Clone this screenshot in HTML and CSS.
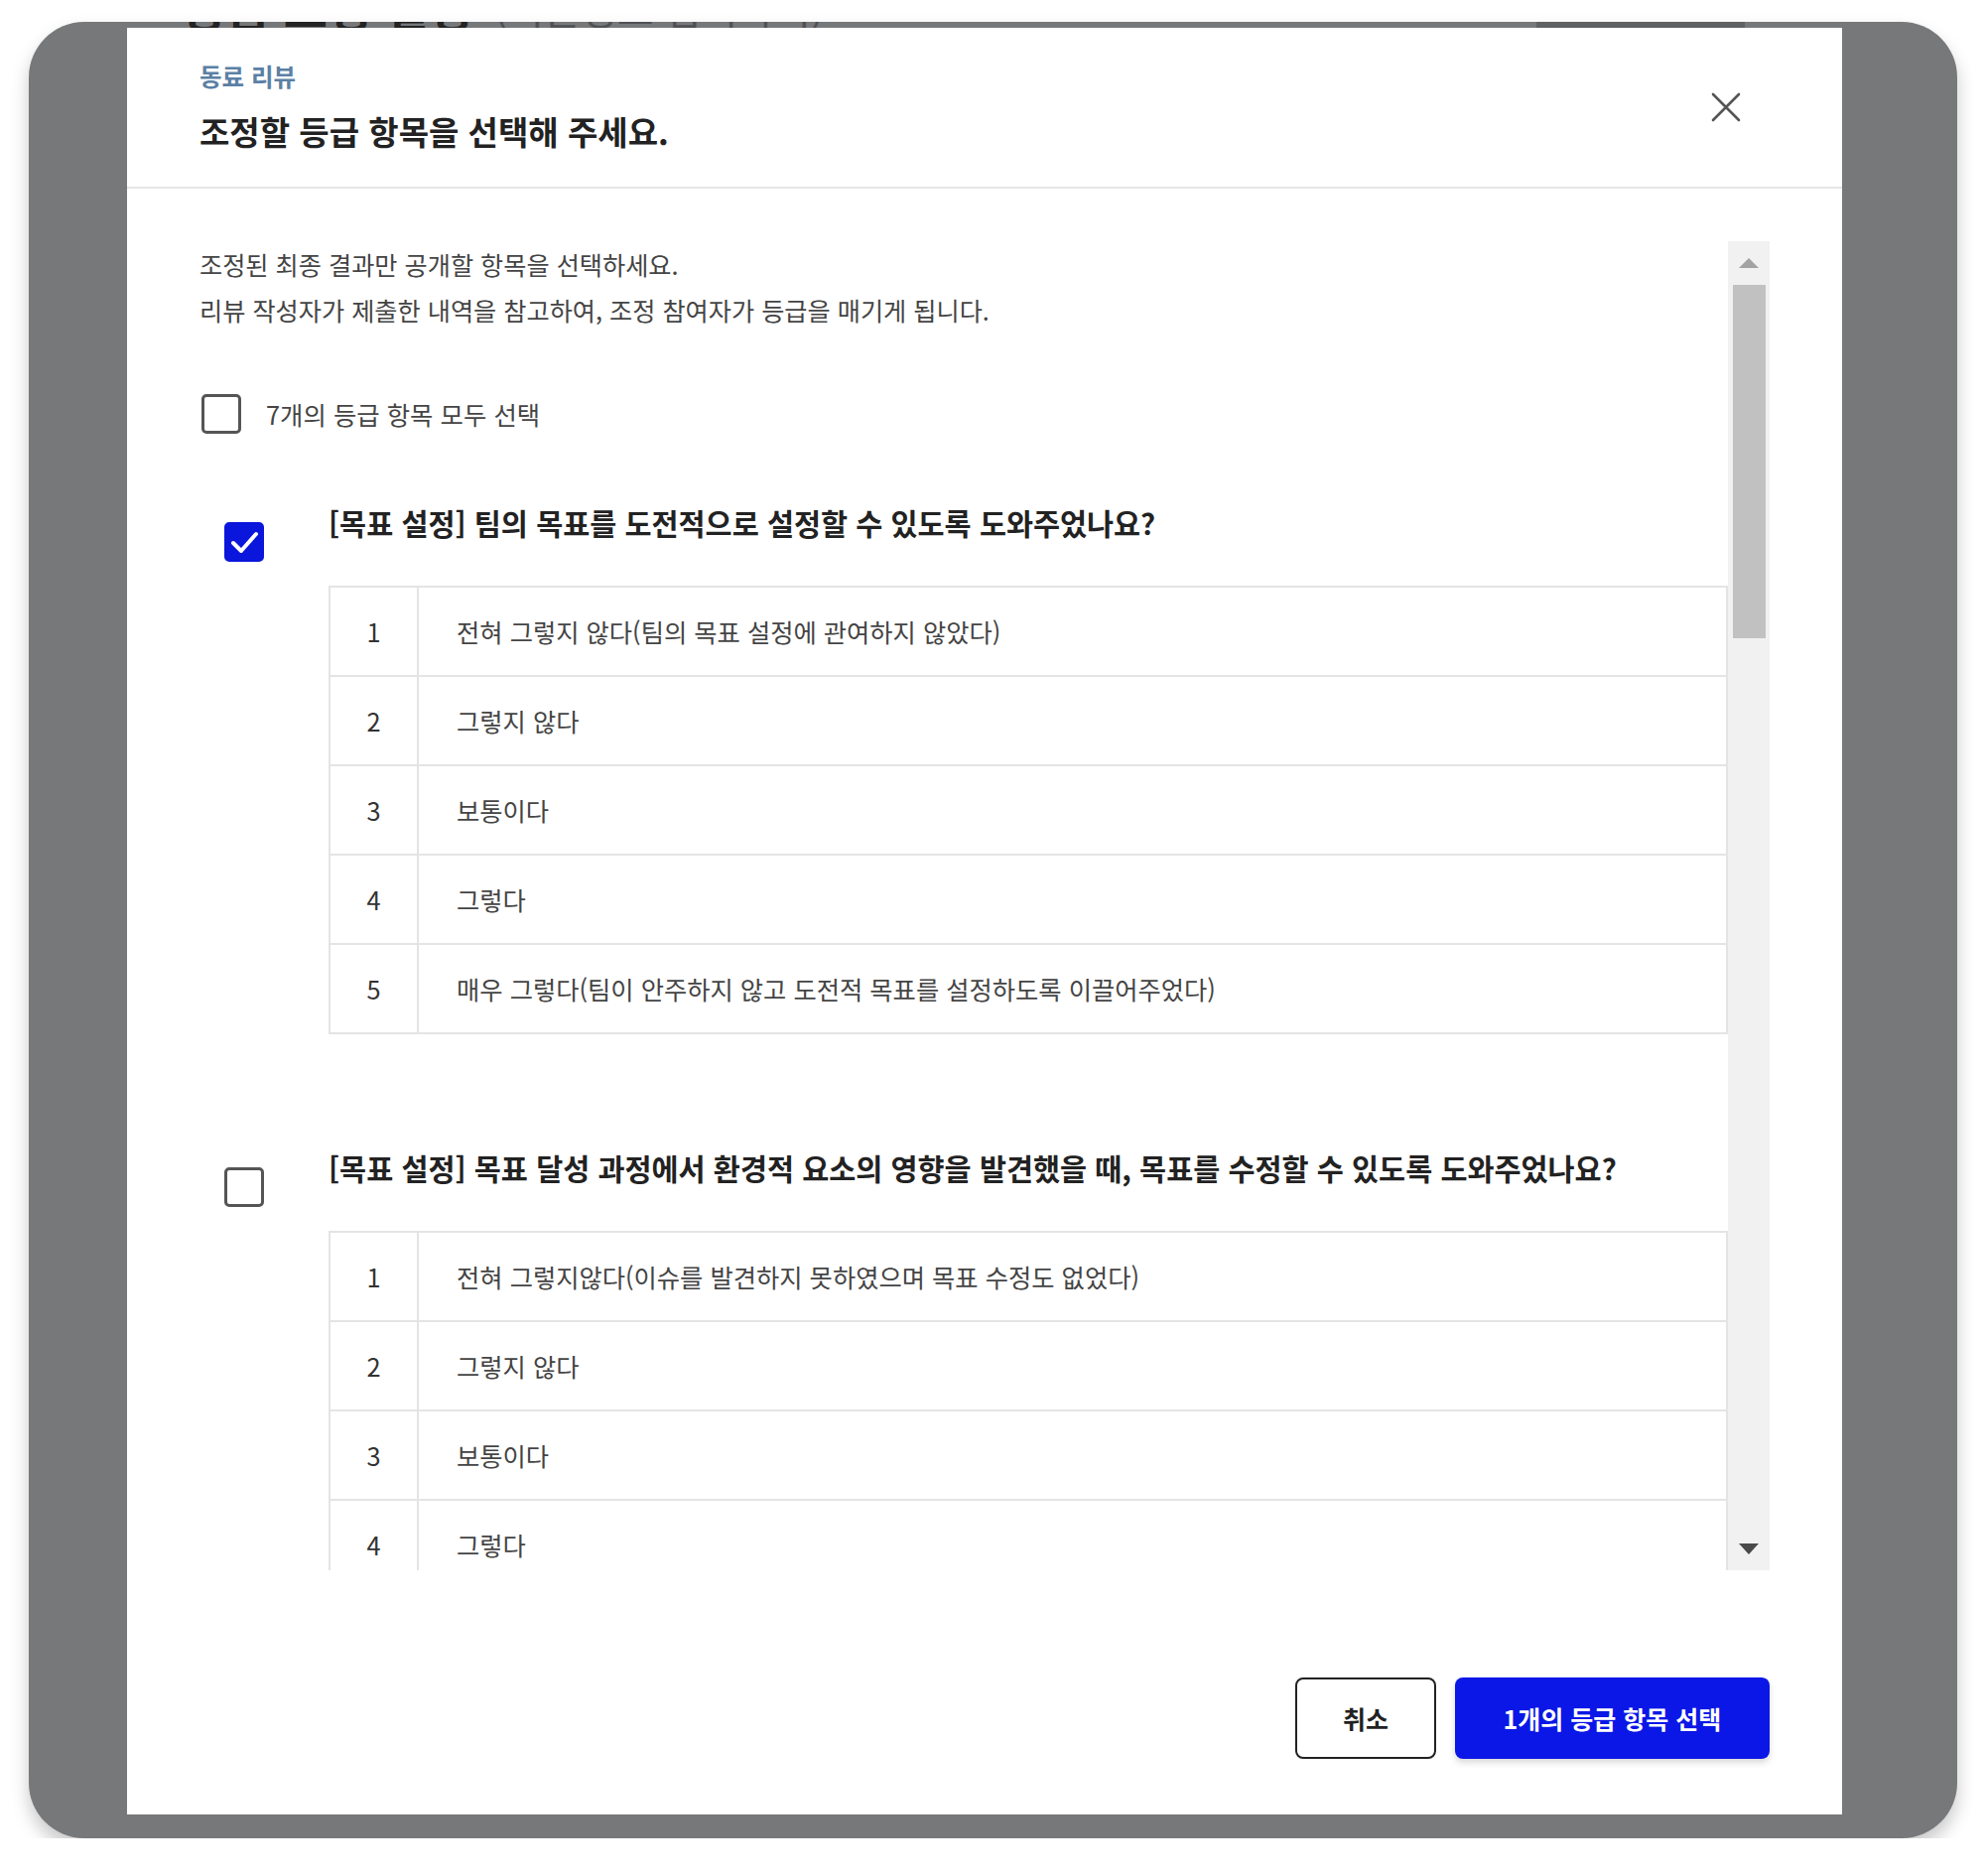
FILE: index.html
```html
<!DOCTYPE html>
<html lang="ko">

<head>
    <meta charset="UTF-8">
    <meta name="viewport" content="width=device-width, initial-scale=1.0">
    <title>동료 리뷰 - 조정할 등급 항목 선택</title>
    <link rel="stylesheet" href="styles.css">
</head>

<body>
    <div class="frame">
        <div class="peek">
            <span class="peek-title">등급 조정 설정</span>
            <span class="peek-sub">(기본정보 입력하기)</span>
            <span class="peek-btn"></span>
        </div>

        <div class="modal">
            <div class="modal-header">
                <div>
                    <p class="eyebrow">동료 리뷰</p>
                    <h1 class="title">조정할 등급 항목을 선택해 주세요.</h1>
                </div>
                <button type="button" class="close" aria-label="닫기">
                    <svg width="30" height="30" viewBox="0 0 30 30">
                        <path d="M2 2 L28 28 M28 2 L2 28" stroke="#555" stroke-width="2.6" stroke-linecap="round" fill="none"/>
                    </svg>
                </button>
            </div>

            <div class="modal-body">
                <div class="content">
                    <p class="desc">조정된 최종 결과만 공개할 항목을 선택하세요.<br>리뷰 작성자가 제출한 내역을 참고하여, 조정 참여자가 등급을 매기게 됩니다.</p>

                    <label class="select-all">
                        <span class="box"></span>
                        7개의 등급 항목 모두 선택
                    </label>

                    <div class="question">
                        <span class="box checked">
                            <svg width="40" height="40" viewBox="0 0 40 40">
                                <path d="M9 21 L17 29 L32 12" stroke="#fff" stroke-width="4" stroke-linecap="round" stroke-linejoin="round" fill="none"/>
                            </svg>
                        </span>
                        <div>
                            <h2 class="q-title">[목표 설정] 팀의 목표를 도전적으로 설정할 수 있도록 도와주었나요?</h2>
                            <table class="scale">
                                <tr><td class="num">1</td><td>전혀 그렇지 않다(팀의 목표 설정에 관여하지 않았다)</td></tr>
                                <tr><td class="num">2</td><td>그렇지 않다</td></tr>
                                <tr><td class="num">3</td><td>보통이다</td></tr>
                                <tr><td class="num">4</td><td>그렇다</td></tr>
                                <tr><td class="num">5</td><td>매우 그렇다(팀이 안주하지 않고 도전적 목표를 설정하도록 이끌어주었다)</td></tr>
                            </table>
                        </div>
                    </div>

                    <div class="question">
                        <span class="box"></span>
                        <div>
                            <h2 class="q-title">[목표 설정] 목표 달성 과정에서 환경적 요소의 영향을 발견했을 때, 목표를 수정할 수 있도록 도와주었나요?</h2>
                            <table class="scale">
                                <tr><td class="num">1</td><td>전혀 그렇지않다(이슈를 발견하지 못하였으며 목표 수정도 없었다)</td></tr>
                                <tr><td class="num">2</td><td>그렇지 않다</td></tr>
                                <tr><td class="num">3</td><td>보통이다</td></tr>
                                <tr><td class="num">4</td><td>그렇다</td></tr>
                                <tr><td class="num">5</td><td>매우 그렇다</td></tr>
                            </table>
                        </div>
                    </div>
                </div>

                <div class="scrollbar">
                    <div class="sb-btn">
                        <svg width="20" height="10" viewBox="0 0 20 10"><polygon points="10,0 20,10 0,10" fill="#a3a3a3"/></svg>
                    </div>
                    <div class="sb-thumb"></div>
                    <div class="sb-track"></div>
                    <div class="sb-btn">
                        <svg width="20" height="11" viewBox="0 0 20 11"><polygon points="0,0 20,0 10,11" fill="#4a4a4a"/></svg>
                    </div>
                </div>
            </div>

            <div class="modal-footer">
                <button type="button" class="btn btn-cancel">취소</button>
                <button type="button" class="btn btn-primary">1개의 등급 항목 선택</button>
            </div>
        </div>
    </div>
</body>

</html>
```

FILE: styles.css
```css
body {
    margin: 0;
    padding: 22px 0 0 29px;
    background-color: #fff;
    font-family: "Noto Sans CJK KR", "Noto Sans", sans-serif;
    color: #333;
}

.frame {
    box-sizing: border-box;
    width: 1943px;
    height: 1830px;
    padding: 0 116px 0 99px;
    background-color: #77787a;
    border-radius: 56px;
    box-shadow: 0 10px 18px rgba(0, 0, 0, 0.22);
    overflow: hidden;
    display: flex;
    flex-direction: column;
}

/* the page underneath, only its bottom edge shows */
.peek {
    height: 6px;
    padding-left: 56px;
    display: flex;
    align-items: flex-end;
    gap: 22px;
    overflow: hidden;
}

.peek-title {
    font-size: 48px;
    line-height: 44px;
    font-weight: 700;
    color: #232324;
    white-space: nowrap;
}

.peek-sub {
    font-size: 40px;
    line-height: 40px;
    color: #505155;
    white-space: nowrap;
}

.peek-btn {
    margin-left: auto;
    margin-right: 98px;
    width: 210px;
    height: 40px;
    background-color: #606163;
}

.modal {
    width: 1728px;
    height: 1800px;
    background-color: #fff;
    display: flex;
    flex-direction: column;
}

.modal-header {
    box-sizing: border-box;
    height: 162px;
    padding: 34px 73px 34px;
    border-bottom: 2px solid #e6e6e6;
    display: flex;
    justify-content: space-between;
    align-items: center;
}

.eyebrow {
    margin: 0;
    font-size: 24.5px;
    line-height: 30px;
    font-weight: 700;
    color: #5b80a5;
}

.title {
    margin: 18px 0 0;
    font-size: 33px;
    line-height: 44px;
    font-weight: 700;
    color: #222;
}

.close {
    width: 44px;
    height: 44px;
    margin-right: 22px;
    padding: 0;
    border: none;
    background: none;
    display: flex;
    align-items: center;
    justify-content: center;
    cursor: pointer;
}

.modal-body {
    padding: 53px 73px 0;
    display: flex;
}

.content {
    flex: 1;
    height: 1339px;
    overflow: hidden;
}

.desc {
    margin: 0;
    font-size: 25.2px;
    line-height: 46px;
    color: #444;
}

.box {
    box-sizing: border-box;
    width: 40px;
    height: 40px;
    border: 3px solid #555;
    border-radius: 5px;
    background-color: #fff;
    display: flex;
    align-items: center;
    justify-content: center;
    flex-shrink: 0;
}

.box.checked {
    border-color: #0b16dc;
    background-color: #0b16dc;
}

.box.checked svg {
    margin: -3px;
}

.select-all {
    margin-top: 62px;
    padding-left: 2px;
    display: flex;
    align-items: center;
    gap: 25px;
    font-size: 25.4px;
    line-height: 40px;
    color: #444;
    cursor: pointer;
}

.question {
    margin-top: 73px;
    display: grid;
    grid-template-columns: 130px 1fr;
}

.question + .question {
    margin-top: 118px;
}

.question > .box {
    margin: 16px 0 0 25px;
}

.q-title {
    margin: -4px 0 44px;
    font-size: 29.4px;
    line-height: 40px;
    font-weight: 700;
    color: #222;
}

.scale {
    width: 100%;
    border-collapse: collapse;
    font-size: 25.3px;
    color: #444;
}

.scale td {
    height: 88px;
    padding: 0 0 0 38px;
    border: 2px solid #e4e4e4;
}

.scale td.num {
    width: 87px;
    padding: 0;
    text-align: center;
    color: #333;
}

.scrollbar {
    width: 42px;
    height: 1339px;
    background-color: #f1f1f1;
    display: flex;
    flex-direction: column;
}

.sb-btn {
    height: 44px;
    display: flex;
    align-items: center;
    justify-content: center;
}

.sb-thumb {
    height: 356px;
    margin: 0 4px 0 5px;
    background-color: #c1c1c1;
}

.sb-track {
    flex: 1;
}

.modal-footer {
    padding: 108px 73px 0;
    display: flex;
    justify-content: flex-end;
    align-items: center;
    gap: 19px;
}

.btn {
    height: 82px;
    border-radius: 8px;
    font-family: inherit;
    font-size: 25px;
    font-weight: 700;
    cursor: pointer;
}

.btn-cancel {
    width: 142px;
    border: 2px solid #222;
    background-color: #fff;
    color: #222;
}

.btn-primary {
    width: 317px;
    border: none;
    background-color: #0b17e6;
    color: #fff;
    box-shadow: 0 4px 6px rgba(0, 0, 0, 0.15);
}
```
